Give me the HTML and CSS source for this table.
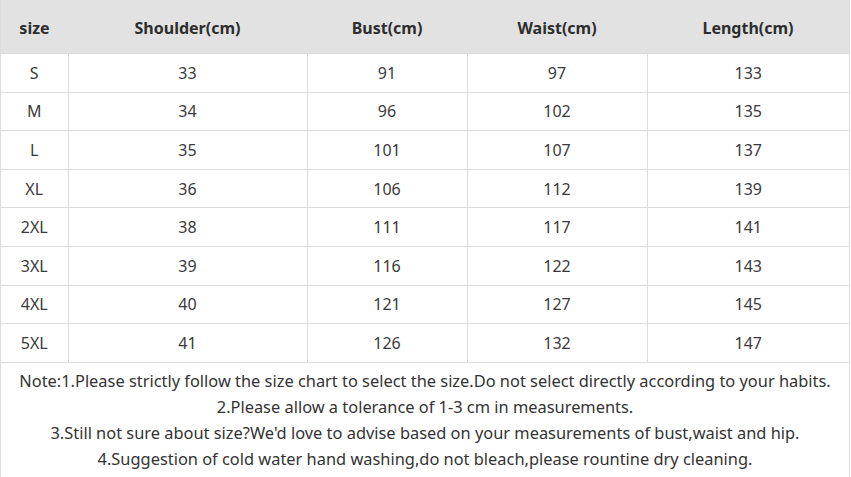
FILE: index.html
```html
<!DOCTYPE html>
<html>
<head>
<meta charset="utf-8">
<link rel="stylesheet" href="styles.css">
</head>
<body>
<div class="chart">
  <table class="sizes">
    <colgroup>
      <col class="c1"><col class="c2"><col class="c3"><col class="c4"><col class="c5">
    </colgroup>
    <thead>
      <tr><th>size</th><th>Shoulder(cm)</th><th>Bust(cm)</th><th>Waist(cm)</th><th>Length(cm)</th></tr>
    </thead>
    <tbody>
      <tr><td>S</td><td>33</td><td>91</td><td>97</td><td>133</td></tr>
      <tr><td>M</td><td>34</td><td>96</td><td>102</td><td>135</td></tr>
      <tr><td>L</td><td>35</td><td>101</td><td>107</td><td>137</td></tr>
      <tr><td>XL</td><td>36</td><td>106</td><td>112</td><td>139</td></tr>
      <tr><td>2XL</td><td>38</td><td>111</td><td>117</td><td>141</td></tr>
      <tr><td>3XL</td><td>39</td><td>116</td><td>122</td><td>143</td></tr>
      <tr><td>4XL</td><td>40</td><td>121</td><td>127</td><td>145</td></tr>
      <tr><td>5XL</td><td>41</td><td>126</td><td>132</td><td>147</td></tr>
    </tbody>
  </table>
  <div class="notes">
    <p>Note:1.Please strictly follow the size chart to select the size.Do not select directly according to your habits.</p>
    <p>2.Please allow a tolerance of 1-3 cm in measurements.</p>
    <p>3.Still not sure about size?We'd love to advise based on your measurements of bust,waist and hip.</p>
    <p>4.Suggestion of cold water hand washing,do not bleach,please rountine dry cleaning.</p>
  </div>
</div>
</body>
</html>
```
FILE: styles.css
```css
html, body {
  margin: 0;
  padding: 0;
  background: #ffffff;
}
body {
  font-family: "Noto Sans", "Open Sans", sans-serif;
  color: #333333;
  width: 851px;
  height: 477px;
  overflow: hidden;
}
.chart {
  width: 850px;
  border-right: 1px solid #dcdcdc;
  border-left: 1px solid #dcdcdc;
  box-sizing: border-box;
  height: 477px;
}
.sizes {
  width: 100%;
  border-collapse: collapse;
  table-layout: fixed;
}
.c1 { width: 67px; }
.c2 { width: 239px; }
.c3 { width: 160px; }
.c4 { width: 180px; }
.c5 { width: auto; }
.sizes th {
  background: #e2e2e2;
  height: 51px;
  padding: 2px 0 0;
  font-size: 16px;
  font-weight: 700;
  color: #2e2e2e;
  text-align: center;
}
.sizes td {
  height: 37.6px;
  padding: 0;
  font-size: 16px;
  color: #3a3a3a;
  text-align: center;
  border-top: 1px solid #dcdcdc;
  border-left: 1px solid #dcdcdc;
}
.sizes td:first-child {
  border-left: none;
}
.sizes tbody tr:last-child td {
  border-bottom: 1px solid #dcdcdc;
}
.notes {
  padding-top: 5px;
  text-align: center;
  font-size: 16.4px;
  color: #333333;
}
.notes p {
  margin: 0;
  line-height: 26px;
}
```
